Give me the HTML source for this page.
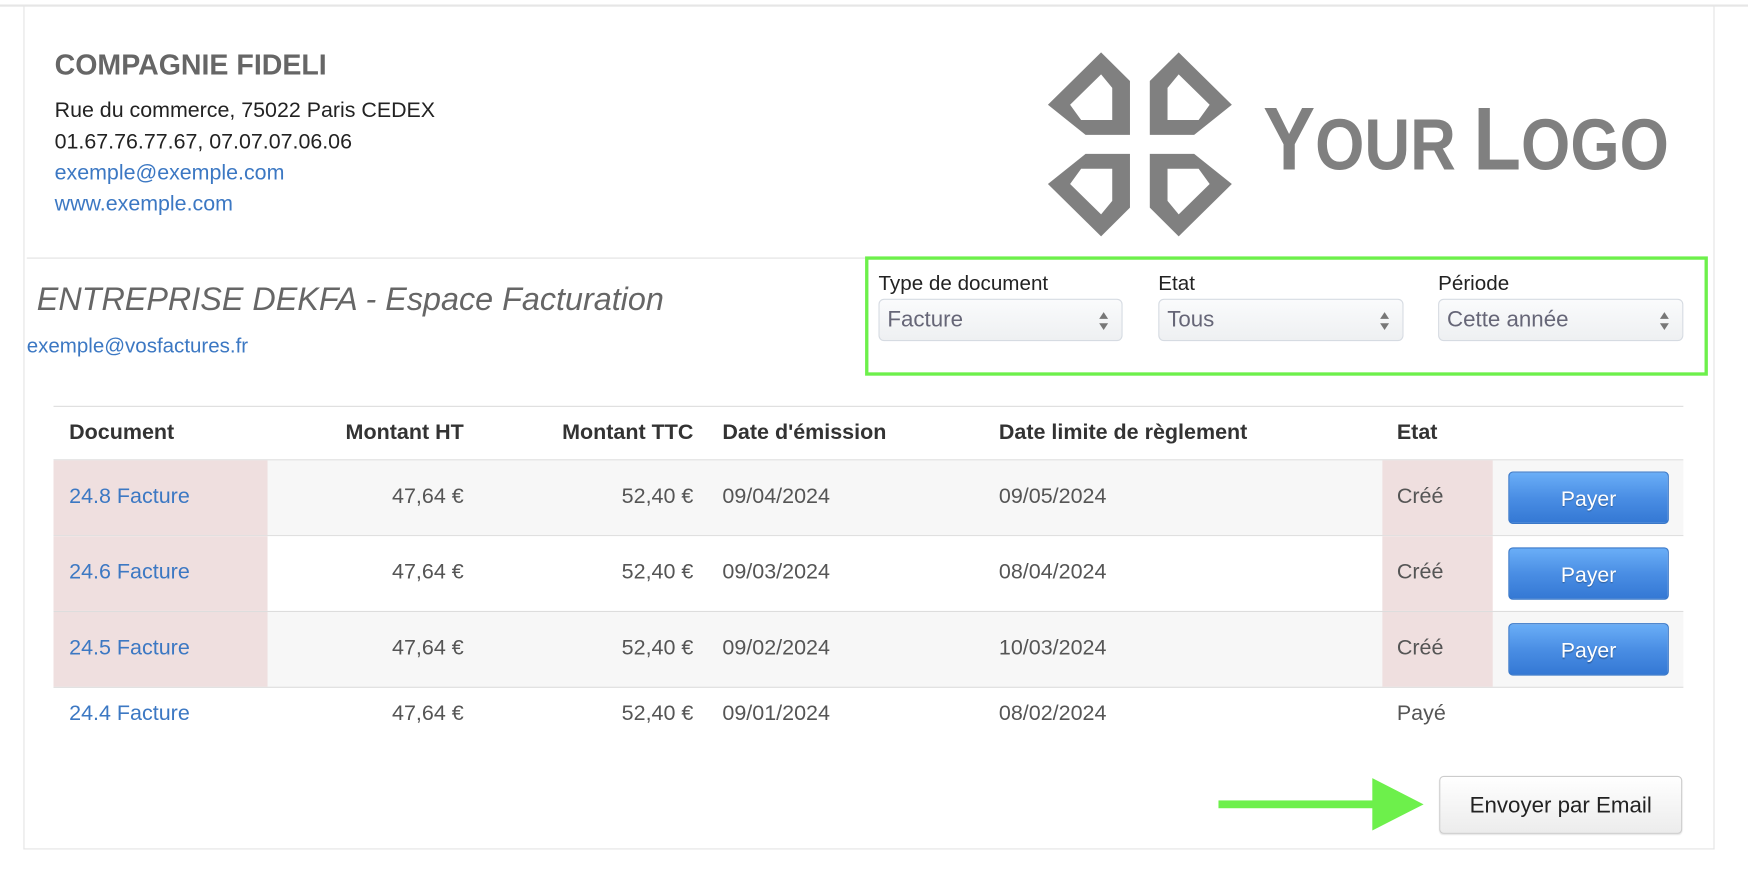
<!DOCTYPE html>
<html><head><meta charset="utf-8"><style>
html,body{margin:0;padding:0;background:#fff;width:1748px;height:876px;overflow:hidden}
#w{position:absolute;left:0;top:0;width:1568px;height:786px;transform:scale(1.11480);transform-origin:0 0;font-family:"Liberation Sans",Arial,sans-serif;color:#333}
.a{position:absolute;white-space:nowrap}
.lnk{color:#3c78c3}
.sel{position:absolute;top:268px;height:38px;border:1px solid #d6dbe2;border-radius:5px;background:linear-gradient(#fafbfc,#eef0f2);font-size:20px;color:#667;line-height:36px;padding-left:7px;box-sizing:border-box}
.sel:after{content:"";position:absolute;right:12px;top:11px;border-left:4px solid transparent;border-right:4px solid transparent;border-bottom:6px solid #777}
.sel:before{content:"";position:absolute;right:12px;top:21px;border-left:4px solid transparent;border-right:4px solid transparent;border-top:6px solid #777}
.lbl{position:absolute;top:243px;font-size:18.5px;color:#222}
.row{position:absolute;left:48px;width:1462px;border-bottom:1px solid #ddd}
.c{position:absolute;font-size:19.3px;color:#555;white-space:nowrap}
.pink{position:absolute;top:0;bottom:0;background:#efdfdf}
.pay{position:absolute;left:1353px;width:144px;height:47px;border:1px solid #3a78c8;border-radius:4px;background:linear-gradient(#6aaef7,#4a8ee4 50%,#3478d4);color:#fff;font-size:19px;text-align:center;line-height:50px;text-shadow:0 1px 1px rgba(0,0,0,.3);box-sizing:border-box}
.h{position:absolute;top:378px;font-size:19.3px;font-weight:bold;color:#333}
</style></head><body><div id="w">
<div class="a" style="left:0;top:4px;width:1568px;height:2px;background:#e6e6e6"></div>
<div class="a" style="left:21px;top:5px;width:1px;height:757px;background:#e4e4e4"></div>
<div class="a" style="left:1537px;top:5px;width:1px;height:757px;background:#e4e4e4"></div>
<div class="a" style="left:21px;top:761px;width:1517px;height:1px;background:#e4e4e4"></div>

<div class="a" style="left:49px;top:45px;font-size:25.6px;font-weight:bold;color:#666">COMPAGNIE FIDELI</div>
<div class="a" style="left:49px;top:86px;font-size:19.2px;color:#222;line-height:28px">Rue du commerce, 75022 Paris CEDEX<br>01.67.76.77.67, 07.07.07.06.06<br><span class="lnk">exemple@exemple.com</span><br><span class="lnk">www.exemple.com</span></div>

<svg class="a" style="left:0;top:0" width="1568" height="240" viewBox="0 0 1568 240">
<g fill="#808080" fill-rule="evenodd">
<path d="M987.7,47 L1013.6,72.7 L1013.6,121 L973.8,121 L940,94 Z M987.7,66.7 L997.7,78.8 L997.7,107.6 L969.8,107.6 L959.9,94 Z"/>
<path d="M1057.3,47 L1031.4,72.7 L1031.4,121 L1071.2,121 L1105,94 Z M1057.3,66.7 L1047.3,78.8 L1047.3,107.6 L1075.2,107.6 L1085.1,94 Z"/>
<path d="M987.7,212 L1013.6,186.3 L1013.6,138 L973.8,138 L940,165 Z M987.7,192.3 L997.7,180.2 L997.7,151.4 L969.8,151.4 L959.9,165 Z"/>
<path d="M1057.3,212 L1031.4,186.3 L1031.4,138 L1071.2,138 L1105,165 Z M1057.3,192.3 L1047.3,180.2 L1047.3,151.4 L1075.2,151.4 L1085.1,165 Z"/>
</g>
<text x="1133" y="152" textLength="364" lengthAdjust="spacingAndGlyphs" fill="#808080" font-family="Liberation Sans,Arial,sans-serif" font-weight="bold"><tspan font-size="80">Y</tspan><tspan font-size="65">OUR </tspan><tspan font-size="80">L</tspan><tspan font-size="65">OGO</tspan></text>
</svg>

<div class="a" style="left:24px;top:231px;width:752px;height:1px;background:#e2e2e2"></div>
<div class="a" style="left:33px;top:253px;font-size:29px;font-style:italic;color:#666">ENTREPRISE DEKFA - Espace Facturation</div>
<div class="a lnk" style="left:24px;top:299px;font-size:18.4px">exemple@vosfactures.fr</div>

<div class="a" style="left:776px;top:230px;width:756px;height:107px;border:3px solid #6df04b;box-sizing:border-box"></div>
<div class="lbl" style="left:788px">Type de document</div>
<div class="lbl" style="left:1039px">Etat</div>
<div class="lbl" style="left:1290px">Période</div>
<div class="sel" style="left:788px;width:219px">Facture</div>
<div class="sel" style="left:1039px;width:220px">Tous</div>
<div class="sel" style="left:1290px;width:220px">Cette année</div>

<div class="a" style="left:48px;top:364px;width:1462px;height:1px;background:#ddd"></div>
<div class="h" style="left:62px">Document</div>
<div class="h" style="left:216px;width:200px;text-align:right">Montant HT</div>
<div class="h" style="left:422px;width:200px;text-align:right">Montant TTC</div>
<div class="h" style="left:648px">Date d'émission</div>
<div class="h" style="left:896px">Date limite de règlement</div>
<div class="h" style="left:1253px">Etat</div>
<div class="a" style="left:48px;top:412px;width:1462px;height:1px;background:#ddd"></div>

<div class="row" style="top:413px;height:67px;background:#f7f7f7"><div class="pink" style="left:0;width:192px"></div><div class="pink" style="left:1192px;width:99px"></div></div>
<div class="row" style="top:481px;height:67px;background:#fff"><div class="pink" style="left:0;width:192px"></div><div class="pink" style="left:1192px;width:99px"></div></div>
<div class="row" style="top:549px;height:67px;background:#f7f7f7"><div class="pink" style="left:0;width:192px"></div><div class="pink" style="left:1192px;width:99px"></div></div>

<div class="c lnk" style="left:62px;top:435px;color:#3c78c3">24.8 Facture</div>
<div class="c" style="left:216px;top:435px;width:200px;text-align:right">47,64 €</div>
<div class="c" style="left:422px;top:435px;width:200px;text-align:right">52,40 €</div>
<div class="c" style="left:648px;top:435px">09/04/2024</div>
<div class="c" style="left:896px;top:435px">09/05/2024</div>
<div class="c" style="left:1253px;top:435px">Créé</div>
<div class="pay" style="top:423px">Payer</div>

<div class="c lnk" style="left:62px;top:503px;color:#3c78c3">24.6 Facture</div>
<div class="c" style="left:216px;top:503px;width:200px;text-align:right">47,64 €</div>
<div class="c" style="left:422px;top:503px;width:200px;text-align:right">52,40 €</div>
<div class="c" style="left:648px;top:503px">09/03/2024</div>
<div class="c" style="left:896px;top:503px">08/04/2024</div>
<div class="c" style="left:1253px;top:503px">Créé</div>
<div class="pay" style="top:491px">Payer</div>

<div class="c lnk" style="left:62px;top:571px;color:#3c78c3">24.5 Facture</div>
<div class="c" style="left:216px;top:571px;width:200px;text-align:right">47,64 €</div>
<div class="c" style="left:422px;top:571px;width:200px;text-align:right">52,40 €</div>
<div class="c" style="left:648px;top:571px">09/02/2024</div>
<div class="c" style="left:896px;top:571px">10/03/2024</div>
<div class="c" style="left:1253px;top:571px">Créé</div>
<div class="pay" style="top:559px">Payer</div>

<div class="c lnk" style="left:62px;top:630px;color:#3c78c3">24.4 Facture</div>
<div class="c" style="left:216px;top:630px;width:200px;text-align:right">47,64 €</div>
<div class="c" style="left:422px;top:630px;width:200px;text-align:right">52,40 €</div>
<div class="c" style="left:648px;top:630px">09/01/2024</div>
<div class="c" style="left:896px;top:630px">08/02/2024</div>
<div class="c" style="left:1253px;top:630px">Payé</div>

<svg class="a" style="left:1090px;top:695px" width="192" height="52"><rect x="3" y="23" width="145" height="7" fill="#6df04b"/><polygon points="141,3 187,26.5 141,50" fill="#6df04b"/></svg>
<div class="a" style="left:1291px;top:696px;width:218px;height:52px;border:1px solid #ccc;border-radius:4px;background:linear-gradient(#fff,#ececec);box-sizing:border-box;font-size:20px;color:#222;text-align:center;line-height:52px;box-shadow:0 1px 1px rgba(0,0,0,.1)">Envoyer par Email</div>
</div></body></html>
